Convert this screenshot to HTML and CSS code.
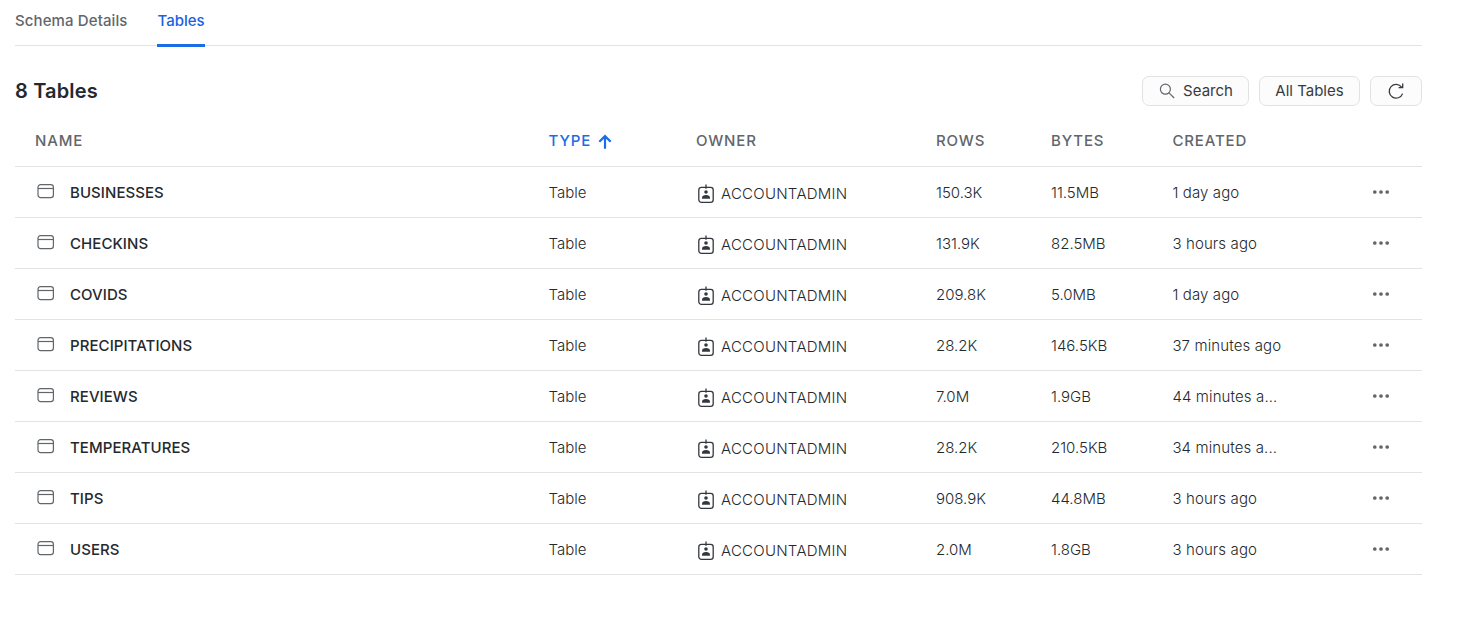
FILE: index.html
```html
<!DOCTYPE html>
<html lang="en">
<head>
<meta charset="utf-8">
<title>Tables</title>
<link rel="stylesheet" href="styles.css">
</head>
<body>
<svg class="sprite" aria-hidden="true">
  <symbol id="i-table" viewBox="0 0 18 16"><rect x="1" y="1.6" width="15.4" height="13" rx="2.6"/><path d="M1 5.5h15.4"/></symbol>
  <symbol id="i-role" viewBox="0 0 18 20"><rect x="1.8" y="3.3" width="14.4" height="15" rx="2.6"/><path d="M9 .6v4.2"/><circle class="solid" cx="9" cy="8" r="1.8"/><path class="solid" d="M5 14.7v-.9c0-1.9 1.5-2.8 4-2.8s4 .9 4 2.8v.9z"/></symbol>
  <symbol id="i-more" viewBox="0 0 18 6"><circle cx="2.8" cy="3" r="1.85"/><circle cx="9" cy="3" r="1.85"/><circle cx="15.2" cy="3" r="1.85"/></symbol>
</svg>
<main class="page">
  <nav class="tabs">
    <a class="tab">Schema Details</a>
    <a class="tab active">Tables</a>
  </nav>
  <header class="toolbar">
    <h1>8 Tables</h1>
    <div class="actions">
      <button class="btn search"><svg width="16" height="16" viewBox="0 0 16 16"><circle cx="6.4" cy="6.2" r="5"/><path d="M10 9.8l5.2 5.2"/></svg>Search</button>
      <button class="btn all">All Tables</button>
      <button class="btn refresh" aria-label="Refresh"><svg width="18" height="18" viewBox="0 0 18 18"><path d="M15.6 11.6A6.9 6.9 0 1 1 14.7 5.2"/><path d="M15.7 1.6v4h-4.1"/></svg></button>
    </div>
  </header>
  <section class="grid">
    <div class="row head"><span>NAME</span><span class="sorted">TYPE<svg width="14" height="16" viewBox="0 0 14 16"><path d="M7 14.8V2.4M1.3 7.8L7 2.1l5.7 5.7"/></svg></span><span>OWNER</span><span>ROWS</span><span>BYTES</span><span>CREATED</span></div>
    <div class="row"><span class="name"><svg class="table-icon"><use href="#i-table"/></svg>BUSINESSES</span><span>Table</span><span class="owner"><svg class="role"><use href="#i-role"/></svg>ACCOUNTADMIN</span><span>150.3K</span><span>11.5MB</span><span class="created">1 day ago</span><svg class="more"><use href="#i-more"/></svg></div>
    <div class="row"><span class="name"><svg class="table-icon"><use href="#i-table"/></svg>CHECKINS</span><span>Table</span><span class="owner"><svg class="role"><use href="#i-role"/></svg>ACCOUNTADMIN</span><span>131.9K</span><span>82.5MB</span><span class="created">3 hours ago</span><svg class="more"><use href="#i-more"/></svg></div>
    <div class="row"><span class="name"><svg class="table-icon"><use href="#i-table"/></svg>COVIDS</span><span>Table</span><span class="owner"><svg class="role"><use href="#i-role"/></svg>ACCOUNTADMIN</span><span>209.8K</span><span>5.0MB</span><span class="created">1 day ago</span><svg class="more"><use href="#i-more"/></svg></div>
    <div class="row"><span class="name"><svg class="table-icon"><use href="#i-table"/></svg>PRECIPITATIONS</span><span>Table</span><span class="owner"><svg class="role"><use href="#i-role"/></svg>ACCOUNTADMIN</span><span>28.2K</span><span>146.5KB</span><span class="created">37 minutes ago</span><svg class="more"><use href="#i-more"/></svg></div>
    <div class="row"><span class="name"><svg class="table-icon"><use href="#i-table"/></svg>REVIEWS</span><span>Table</span><span class="owner"><svg class="role"><use href="#i-role"/></svg>ACCOUNTADMIN</span><span>7.0M</span><span>1.9GB</span><span class="created">44 minutes a...</span><svg class="more"><use href="#i-more"/></svg></div>
    <div class="row"><span class="name"><svg class="table-icon"><use href="#i-table"/></svg>TEMPERATURES</span><span>Table</span><span class="owner"><svg class="role"><use href="#i-role"/></svg>ACCOUNTADMIN</span><span>28.2K</span><span>210.5KB</span><span class="created">34 minutes a...</span><svg class="more"><use href="#i-more"/></svg></div>
    <div class="row"><span class="name"><svg class="table-icon"><use href="#i-table"/></svg>TIPS</span><span>Table</span><span class="owner"><svg class="role"><use href="#i-role"/></svg>ACCOUNTADMIN</span><span>908.9K</span><span>44.8MB</span><span class="created">3 hours ago</span><svg class="more"><use href="#i-more"/></svg></div>
    <div class="row"><span class="name"><svg class="table-icon"><use href="#i-table"/></svg>USERS</span><span>Table</span><span class="owner"><svg class="role"><use href="#i-role"/></svg>ACCOUNTADMIN</span><span>2.0M</span><span>1.8GB</span><span class="created">3 hours ago</span><svg class="more"><use href="#i-more"/></svg></div>
  </section>
</main>
</body>
</html>
```
FILE: styles.css
```css
* { box-sizing: border-box; }
body { margin: 0; background: #fff; color: #25292e; font-family: Inter, sans-serif; font-size: 15px; }
svg { flex: none; fill: none; stroke: currentColor; }
.sprite { display: none; }
.page { width: 1422px; padding-left: 15px; }
.tabs { display: flex; gap: 29px; height: 46px; border-bottom: 1px solid #e2e3e4; }
.tab { height: 47px; line-height: 20px; padding-top: 11px; font-weight: 500; letter-spacing: 0.11px; color: #62666b; }
.tab.active { color: #1a62e0; border-bottom: 3px solid #1a6ce7; padding-left: 1px; letter-spacing: 0; }
.toolbar { display: flex; align-items: center; justify-content: space-between; height: 30px; margin-top: 30px; }
h1 { margin: 0; font-size: 20px; line-height: 30px; font-weight: 600; letter-spacing: 0.15px; }
.actions { display: flex; gap: 10px; }
.btn { display: flex; align-items: center; justify-content: center; height: 30px; padding: 0 0 1px; border: 1px solid #e1e2e4; border-radius: 7px; background: #fcfcfc; color: #373b41; font: 400 15px Inter, sans-serif; }
.search { width: 107px; gap: 8px; padding-left: 1px; }
.search svg { color: #62666b; stroke-width: 1.2; }
.all { width: 101px; }
.refresh { width: 52px; }
.refresh svg { stroke-width: 1.3; }
.grid { margin-top: 11px; }
.row { display: grid; grid-template-columns: 513.5px 147.5px 240px 115px 121.4px 199.6px 18px; align-items: center; height: 51px; padding: 2px 0 0 20px; border-bottom: 1px solid #e2e3e4; font-weight: 300; line-height: 20px; }
.head { height: 50px; padding-top: 0; padding-bottom: 1px; font-weight: 500; letter-spacing: 0.85px; color: #62666b; }
.sorted { display: flex; align-items: center; gap: 7px; color: #1a6ce7; }
.sorted svg { stroke-width: 2.2; position: relative; top: 1px; }
.name { display: flex; align-items: center; gap: 15px; padding-left: 2px; font-weight: 500; letter-spacing: 0.06px; }
.table-icon { width: 18px; height: 16px; margin-top: -4px; color: #62666b; stroke-width: 1.2; }
.owner { display: flex; align-items: center; gap: 6px; padding: 2px 0 0 1px; letter-spacing: 0.26px; }
.role { width: 18px; height: 20px; color: #34383e; stroke-width: 1.3; }
.created { letter-spacing: 0.12px; }
.solid { fill: currentColor; stroke: none; }
.more { width: 18px; height: 6px; margin-top: -2px; fill: #62666b; stroke: none; }
```
